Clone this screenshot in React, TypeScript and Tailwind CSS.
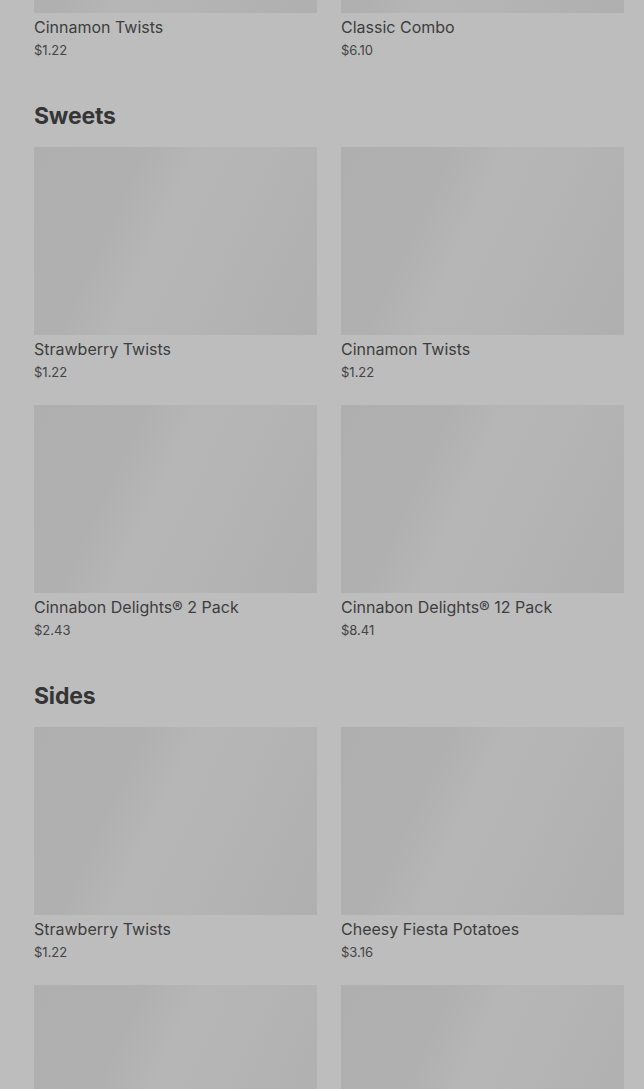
import React from "react";

type Item = { name?: string; price?: string };

const top: Item[] = [
  { name: "Cinnamon Twists", price: "$1.22" },
  { name: "Classic Combo", price: "$6.10" },
];

const sections: { title: string; items: Item[] }[] = [
  {
    title: "Sweets",
    items: [
      { name: "Strawberry Twists", price: "$1.22" },
      { name: "Cinnamon Twists", price: "$1.22" },
      { name: "Cinnabon Delights® 2 Pack", price: "$2.43" },
      { name: "Cinnabon Delights® 12 Pack", price: "$8.41" },
    ],
  },
  {
    title: "Sides",
    items: [
      { name: "Strawberry Twists", price: "$1.22" },
      { name: "Cheesy Fiesta Potatoes", price: "$3.16" },
      {},
      {},
    ],
  },
];

function Card({ item }: { item: Item }) {
  return (
    <div className="flex flex-col">
      <div className="h-[188px] w-full bg-[linear-gradient(115deg,#afafaf_0%,#b0b0b0_30%,#b6b6b6_45%,#b5b5b5_60%,#b2b2b2_80%,#afafaf_100%)]" />
      {item.name && (
        <>
          <div className="mt-[3px] text-[16px] leading-[22px] text-[#3d3d3d]">
            {item.name}
          </div>
          <div className="text-[13px] leading-[24px] text-[#444444]">{item.price}</div>
        </>
      )}
    </div>
  );
}

export default function App() {
  return (
    <div
      className="h-[1089px] w-full overflow-hidden bg-[#bdbdbd]"
      style={{ fontFamily: "Inter, 'Liberation Sans', sans-serif" }}
    >
      <div className="-mt-[175px] pl-[34px] pr-[20px]">
        <div className="grid grid-cols-2 gap-x-[24px] gap-y-[21px]">
          {top.map((it, i) => (
            <Card key={i} item={it} />
          ))}
        </div>
        {sections.map((s) => (
          <div key={s.title} className="mt-[38px]">
            <h2 className="mb-[15px] text-[23px] leading-[32px] font-bold text-[#353535] tracking-[-0.2px]">
              {s.title}
            </h2>
            <div className="grid grid-cols-2 gap-x-[24px] gap-y-[21px]">
              {s.items.map((it, i) => (
                <Card key={i} item={it} />
              ))}
            </div>
          </div>
        ))}
      </div>
    </div>
  );
}
